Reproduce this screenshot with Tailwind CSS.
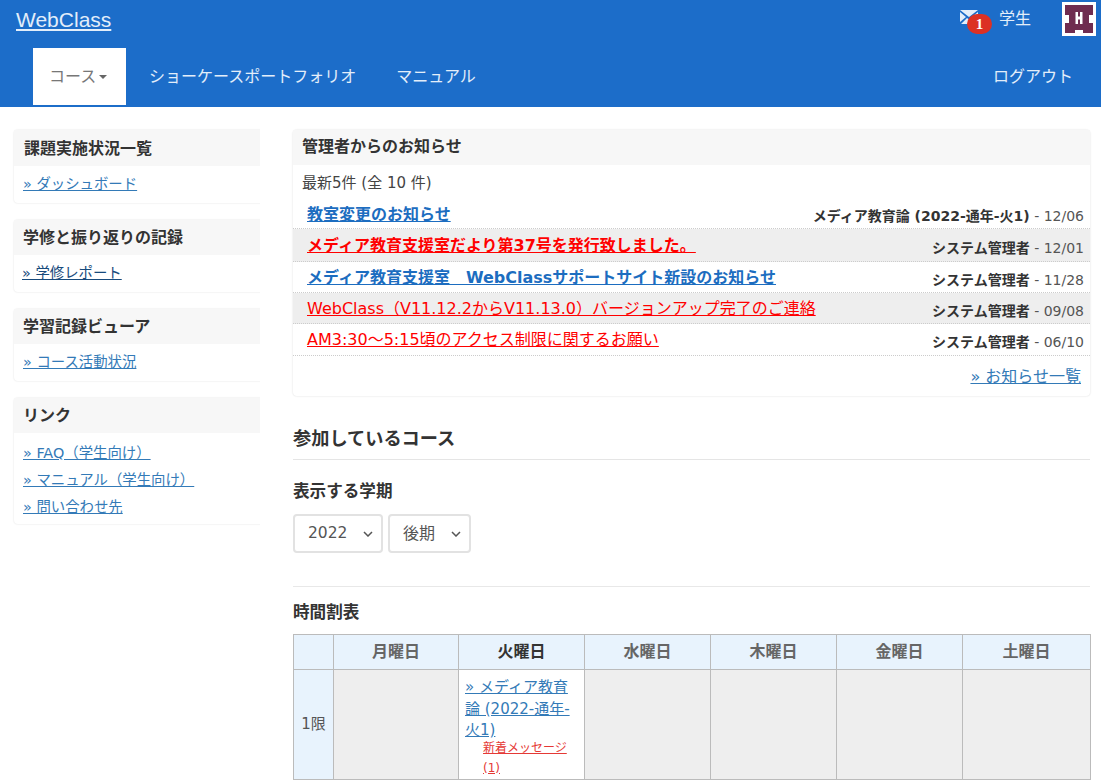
<!doctype html>
<html lang="ja">
<head>
<meta charset="UTF-8" />
<title>WebClass</title>
<script src="https://cdn.jsdelivr.net/npm/@tailwindcss/browser@4"></script>
</head>
<body class="h-[783px] overflow-hidden bg-white font-['DejaVu_Sans','Noto_Sans_CJK_JP',sans-serif] text-[15px] text-[#444]">
<!-- header -->
<header class="h-[107px] bg-[#1c6dc9] text-[#e3eefa]">
  <div class="flex h-[48px] items-start">
    <a href="#" class="ml-[16px] mt-[7px] font-['Liberation_Sans','Noto_Sans_CJK_JP',sans-serif] text-[21px] leading-[26px] underline underline-offset-2">WebClass</a>
    <div class="ml-auto flex items-start">
      <div class="relative mt-[10px] h-[14px] w-[18px]">
        <svg viewBox="0 0 18 14" class="h-[14px] w-[18px]"><path d="M0 0h18L9 7z M0 2v10l6-5z M18 2v10l-6-5z M1 14l6-6 2 1.600 2-1.600 6 6z" fill="#e3eefa"/></svg>
        <span class="absolute left-[7px] top-[4px] flex h-[20px] w-[25px] items-center justify-center rounded-full bg-[#dc3124] font-['Liberation_Serif'] text-[15px] font-bold text-white">1</span>
      </div>
      <span class="ml-[21px] mt-[8px] text-[16px] leading-[22px]">学生</span>
      <div class="ml-[31px] mr-[5px] mt-[2px] h-[34px] w-[34px] bg-white p-[3px]">
        <svg viewBox="0 0 28 28" class="h-[28px] w-[28px]"><path d="M0 0h28v10h-4v8h4v10H18v-3h-8v3H0V18h4v-8H0z M10.500 7v12h2.500v-4.500h2V19h2.500V7H15v4.500h-2V7z" fill="#6f2c50" fill-rule="evenodd"/></svg>
      </div>
    </div>
  </div>
  <nav class="flex h-[59px] items-start pl-[33px] text-[16px]">
    <a href="#" class="flex h-[57px] w-[93px] items-center bg-white pl-[16px] text-[#777]">コース<span class="ml-[3px] h-0 w-0 border-x-[4px] border-t-[4px] border-x-transparent border-t-[#666]"></span></a>
    <a href="#" class="ml-[23px] mt-[17px] leading-[24px]">ショーケースポートフォリオ</a>
    <a href="#" class="ml-[40px] mt-[17px] leading-[24px]">マニュアル</a>
    <a href="#" class="ml-auto mr-[28px] mt-[17px] leading-[24px]">ログアウト</a>
  </nav>
</header>

<div class="flex items-start pl-[12px] pr-[11px] pt-[21px]">
  <!-- sidebar: panels run into the column edge, right side is clipped -->
  <aside class="flex w-[248px] shrink-0 flex-col gap-[17px] overflow-hidden py-[2px] pl-[2px]">
    <section class="mr-[-6px] rounded-[4px] shadow-[0_0_2px_rgba(0,0,0,0.14)]">
      <h3 class="flex h-[36px] items-center bg-[#f7f7f7] pl-[10px] pt-[1px] text-[16px] font-bold text-[#333]">課題実施状況一覧</h3>
      <div class="flex h-[37px] items-center pl-[9px] text-[14.400px] text-[#337ab7]"><a href="#" class="underline">» ダッシュボード</a></div>
    </section>
    <section class="mr-[-6px] rounded-[4px] shadow-[0_0_2px_rgba(0,0,0,0.14)]">
      <h3 class="flex h-[35px] items-center bg-[#f7f7f7] pl-[9px] text-[16px] font-bold text-[#333]">学修と振り返りの記録</h3>
      <div class="flex h-[37px] items-center pl-[8px] text-[14.400px] text-[#174a7c]"><a href="#" class="underline">» 学修レポート</a></div>
    </section>
    <section class="mr-[-6px] rounded-[4px] shadow-[0_0_2px_rgba(0,0,0,0.14)]">
      <h3 class="flex h-[35px] items-center bg-[#f7f7f7] pl-[9px] pt-[1px] text-[16px] font-bold text-[#333]">学習記録ビューア</h3>
      <div class="flex h-[37px] items-center pl-[9px] text-[14.400px] text-[#337ab7]"><a href="#" class="underline">» コース活動状況</a></div>
    </section>
    <section class="mr-[-6px] rounded-[4px] shadow-[0_0_2px_rgba(0,0,0,0.14)]">
      <h3 class="flex h-[35px] items-center bg-[#f7f7f7] pl-[9px] pt-[1px] text-[16px] font-bold text-[#333]">リンク</h3>
      <ul class="pb-[3px] pl-[9px] pt-[7px] text-[14.400px] leading-[27px] text-[#337ab7]">
        <li><a href="#" class="underline">» FAQ（学生向け）</a></li>
        <li><a href="#" class="underline">» マニュアル（学生向け）</a></li>
        <li><a href="#" class="underline">» 問い合わせ先</a></li>
      </ul>
    </section>
  </aside>

  <main class="ml-[33px] mt-[2px] min-w-0 flex-1">
    <!-- notices -->
    <section class="h-[266px] rounded-[4px] shadow-[0_0_2px_rgba(0,0,0,0.16)]">
      <h3 class="flex h-[35px] items-center bg-[#f7f7f7] pb-[2px] pl-[9px] text-[16px] font-bold text-[#333]">管理者からのお知らせ</h3>
      <p class="flex h-[37px] items-center pl-[9px] text-[15px] text-[#444]">最新5件 (全 10 件)</p>
      <div class="flex h-[27px] items-center justify-between border-b border-dotted border-[#ccc] pl-[14px] pr-[6px]">
        <a href="#" class="mt-[-1px] text-[16px] font-bold text-[#1c6dc0] underline">教室変更のお知らせ</a>
        <span class="mt-[3px] text-[14px] text-[#555]"><b class="text-[#333]">メディア教育論 (2022-通年-火1)</b> - 12/06</span>
      </div>
      <div class="flex h-[33px] items-center justify-between border-b border-dotted border-[#ccc] bg-[#eee] pl-[14px] pr-[6px]">
        <a href="#" class="mt-[2px] text-[16px] font-bold text-[#ff0000] underline">メディア教育支援室だより第37号を発行致しました。</a>
        <span class="mt-[6px] text-[14px] text-[#555]"><b class="text-[#333]">システム管理者</b> - 12/01</span>
      </div>
      <div class="flex h-[31px] items-center justify-between border-b border-dotted border-[#ccc] pl-[14px] pr-[6px]">
        <a href="#" class="mt-[1px] text-[16px] font-bold text-[#1c6dc0] underline">メディア教育支援室　WebClassサポートサイト新設のお知らせ</a>
        <span class="mt-[6px] text-[14px] text-[#555]"><b class="text-[#333]">システム管理者</b> - 11/28</span>
      </div>
      <div class="flex h-[31px] items-center justify-between border-b border-dotted border-[#ccc] bg-[#eee] pl-[14px] pr-[6px]">
        <a href="#" class="mt-[1px] text-[16px] text-[#ff0000] underline">WebClass（V11.12.2からV11.13.0）バージョンアップ完了のご連絡</a>
        <span class="mt-[6px] text-[14px] text-[#555]"><b class="text-[#333]">システム管理者</b> - 09/08</span>
      </div>
      <div class="flex h-[32px] items-center justify-between border-b border-dotted border-[#ccc] pl-[14px] pr-[6px]">
        <a href="#" class="mt-[1px] text-[16px] text-[#ff0000] underline">AM3:30～5:15頃のアクセス制限に関するお願い</a>
        <span class="mt-[6px] text-[14px] text-[#555]"><b class="text-[#333]">システム管理者</b> - 06/10</span>
      </div>
      <div class="pr-[9px] pt-[9px] text-right text-[16px] leading-[24px] text-[#337ab7]"><a href="#" class="underline">» お知らせ一覧</a></div>
    </section>

    <h2 class="mt-[29px] border-b border-[#e5e5e5] pb-[7px] text-[18.200px] font-bold leading-[27px] text-[#333]">参加しているコース</h2>
    <h4 class="mt-[21px] text-[16.600px] font-bold leading-[22px] text-[#333]">表示する学期</h4>
    <div class="mt-[11px] flex gap-[5px]">
      <div class="flex h-[39px] w-[90px] items-center justify-between rounded-[4px] border-2 border-[#e2e2e2] pl-[13px] pr-[8px] text-[15.500px] text-[#555]">2022
        <svg viewBox="0 0 10 6" class="h-[6px] w-[10px]"><path d="M1 1l4 4 4-4" fill="none" stroke="#555" stroke-width="1.500"/></svg></div>
      <div class="flex h-[39px] w-[83px] items-center justify-between rounded-[4px] border-2 border-[#e2e2e2] pl-[13px] pr-[8px] text-[16px] text-[#555]">後期
        <svg viewBox="0 0 10 6" class="h-[6px] w-[10px]"><path d="M1 1l4 4 4-4" fill="none" stroke="#555" stroke-width="1.500"/></svg></div>
    </div>
    <hr class="mt-[33px] border-[#e8e8e8]" />
    <h4 class="mt-[15px] text-[16.600px] font-bold leading-[22px] text-[#333]">時間割表</h4>

    <table class="mt-[10px] w-[797px] table-fixed border-collapse text-center text-[16px]">
      <colgroup><col class="w-[40px]"/><col class="w-[125px]"/><col class="w-[126px]"/><col class="w-[126px]"/><col class="w-[126px]"/><col class="w-[126px]"/><col class="w-[128px]"/></colgroup>
      <thead>
        <tr class="h-[35px] bg-[#e8f3fd] font-bold text-[#666]">
          <th class="border border-[#bbb]"></th>
          <th class="border border-[#bbb]">月曜日</th>
          <th class="border border-[#bbb] text-[#333]">火曜日</th>
          <th class="border border-[#bbb]">水曜日</th>
          <th class="border border-[#bbb]">木曜日</th>
          <th class="border border-[#bbb]">金曜日</th>
          <th class="border border-[#bbb]">土曜日</th>
        </tr>
      </thead>
      <tbody>
        <tr class="h-[110px]">
          <td class="border border-[#bbb] bg-[#e8f3fd] text-[15px] text-[#555]">1限</td>
          <td class="border border-[#bbb] bg-[#eee]"></td>
          <td class="border border-[#bbb] px-[6px] text-left align-top">
            <a href="#" class="mt-[7px] block text-[15px] leading-[21.500px] text-[#337ab7] underline">» メディア教育論 (2022-通年-火1)</a>
            <a href="#" class="ml-[18px] mt-[-4px] block text-[12px] leading-[20px] text-[#e53935] underline">新着メッセージ (1)</a>
          </td>
          <td class="border border-[#bbb] bg-[#eee]"></td>
          <td class="border border-[#bbb] bg-[#eee]"></td>
          <td class="border border-[#bbb] bg-[#eee]"></td>
          <td class="border border-[#bbb] bg-[#eee]"></td>
        </tr>
      </tbody>
    </table>
  </main>
</div>
</body>
</html>
